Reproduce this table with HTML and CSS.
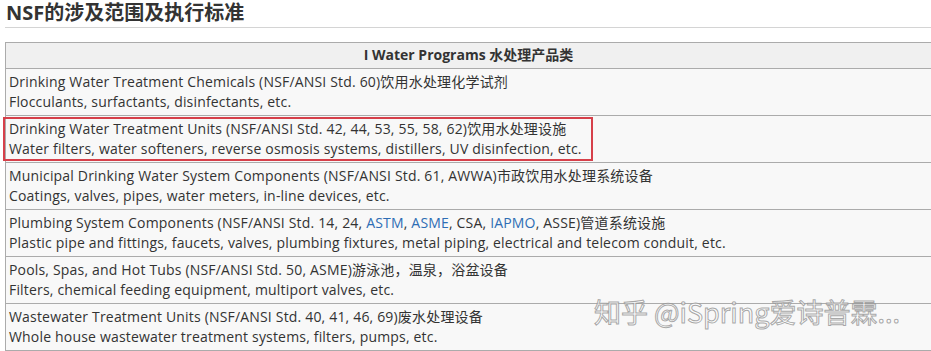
FILE: index.html
```html
<!DOCTYPE html>
<html lang="zh">
<head>
<meta charset="utf-8">
<link rel="stylesheet" href="styles.css">
</head>
<body>
<div class="page">
  <h2 class="title">NSF的涉及范围及执行标准</h2>
  <table class="std">
    <thead>
      <tr><th>I Water Programs 水处理产品类</th></tr>
    </thead>
    <tbody>
      <tr><td>Drinking Water Treatment Chemicals (NSF/ANSI Std. 60)饮用水处理化学试剂<br>Flocculants, surfactants, disinfectants, etc.</td></tr>
      <tr><td class="marked"><span class="mark"></span>Drinking Water Treatment Units (NSF/ANSI Std. 42, 44, 53, 55, 58, 62)饮用水处理设施<br>Water filters, water softeners, reverse osmosis systems, distillers, UV disinfection, etc.</td></tr>
      <tr><td>Municipal Drinking Water System Components (NSF/ANSI Std. 61, AWWA)市政饮用水处理系统设备<br>Coatings, valves, pipes, water meters, in-line devices, etc.</td></tr>
      <tr><td>Plumbing System Components (NSF/ANSI Std. 14, 24, <a href="#">ASTM</a>, <a href="#">ASME</a>, CSA, <a href="#">IAPMO</a>, ASSE)管道系统设施<br>Plastic pipe and fittings, faucets, valves, plumbing fixtures, metal piping, electrical and telecom conduit, etc.</td></tr>
      <tr><td>Pools, Spas, and Hot Tubs (NSF/ANSI Std. 50, ASME)游泳池，温泉，浴盆设备<br>Filters, chemical feeding equipment, multiport valves, etc.</td></tr>
      <tr><td>Wastewater Treatment Units (NSF/ANSI Std. 40, 41, 46, 69)废水处理设备<br>Whole house wastewater treatment systems, filters, pumps, etc.</td></tr>
    </tbody>
  </table>
  <div class="watermark">知乎 @iSpring爱诗普霖...</div>
</div>
</body>
</html>
```
FILE: styles.css
```css
html, body {
  margin: 0;
  padding: 0;
  background: #fff;
  overflow: hidden;
}
.page {
  position: relative;
  padding: 0 0 0 5px;
  width: 940px;
  font-family: "Open Sans", "Noto Sans CJK SC", sans-serif;
  color: #333;
}
.title {
  margin: 0;
  padding: 1px 0 3px 1px;
  font-family: "Noto Sans", "Noto Sans CJK SC", sans-serif;
  font-size: 20px;
  line-height: 23px;
  font-weight: 700;
  color: #333;
  border-bottom: 1px solid #d4d4d4;
}
.std {
  margin-top: 14px;
  width: 927px;
  border-collapse: collapse;
  font-size: 14px;
  line-height: 20px;
  letter-spacing: 0.18px;
}
.std th, .std td {
  border: 1px solid #ababab;
  text-align: left;
  padding: 3px 3px;
}
.std th {
  background: #f0f0f0;
  text-align: center;
  font-weight: 700;
  padding: 2px 3px 3px;
  letter-spacing: 0;
}
.std td {
  background: #f8f8f8;
  white-space: nowrap;
}
.std a {
  color: #2e6db4;
  text-decoration: none;
}
.marked {
  position: relative;
}
.mark {
  position: absolute;
  left: -3px;
  top: 1px;
  width: 586px;
  height: 40px;
  border: 2px solid #d6404a;
}
.watermark {
  position: absolute;
  left: 594px;
  top: 293px;
  font-family: "Noto Sans CJK SC", sans-serif;
  font-size: 27px;
  line-height: 38px;
  color: rgba(255, 255, 255, 0.7);
  -webkit-text-stroke: 1px rgba(140, 140, 140, 0.75);
}
```
